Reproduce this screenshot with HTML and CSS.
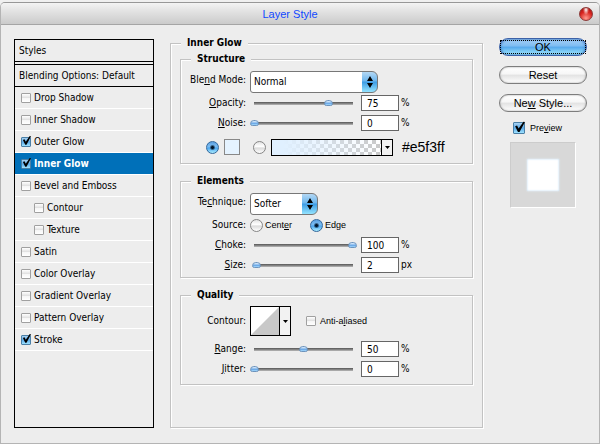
FILE: index.html
```html
<!DOCTYPE html>
<html lang="en">
<head>
<meta charset="utf-8">
<title>Layer Style</title>
<link rel="stylesheet" href="styles.css">
</head>
<body>
<main class="window">
  <header class="titlebar">
    <h1>Layer Style</h1>
    <button class="close" type="button" aria-label="Close"></button>
  </header>
  <form class="content">
    <nav class="styles">
      <h2>Styles</h2>
      <p class="blending">Blending Options: Default</p>
      <ul>
        <li><label><input type="checkbox" class="check">Drop Shadow</label></li>
        <li><label><input type="checkbox" class="check">Inner Shadow</label></li>
        <li><label><input type="checkbox" class="check" checked>Outer Glow</label></li>
        <li class="selected"><label><input type="checkbox" class="check" checked>Inner Glow</label></li>
        <li><label><input type="checkbox" class="check">Bevel and Emboss</label></li>
        <li class="nested"><label><input type="checkbox" class="check">Contour</label></li>
        <li class="nested"><label><input type="checkbox" class="check">Texture</label></li>
        <li><label><input type="checkbox" class="check">Satin</label></li>
        <li><label><input type="checkbox" class="check">Color Overlay</label></li>
        <li><label><input type="checkbox" class="check">Gradient Overlay</label></li>
        <li><label><input type="checkbox" class="check">Pattern Overlay</label></li>
        <li><label><input type="checkbox" class="check" checked>Stroke</label></li>
      </ul>
    </nav>

    <fieldset class="panel">
      <legend>Inner Glow</legend>
      <fieldset class="group structure">
        <legend>Structure</legend>
        <div class="row tall">
          <label class="name" for="blend">Ble<u>n</u>d Mode:</label>
          <span class="select wide">
            <select id="blend"><option>Normal</option><option>Screen</option></select>
            <svg viewBox="0 0 8 12" aria-hidden="true"><path d="M4 0 7 5H1zM4 12 1 7H7z"/></svg>
          </span>
        </div>
        <div class="row">
          <label class="name" for="opacity"><u>O</u>pacity:</label>
          <input class="slider" type="range" min="0" max="100" value="75" aria-label="Opacity slider">
          <input class="value" id="opacity" type="text" value="75"><span class="unit">%</span>
        </div>
        <div class="row">
          <label class="name" for="noise"><u>N</u>oise:</label>
          <input class="slider" type="range" min="0" max="100" value="0" aria-label="Noise slider">
          <input class="value" id="noise" type="text" value="0"><span class="unit">%</span>
        </div>
        <div class="fill">
          <input class="radio" type="radio" name="fill" aria-label="Solid color" checked>
          <button class="swatch" type="button" aria-label="Glow color"></button>
          <input class="radio" type="radio" name="fill" aria-label="Gradient">
          <button class="gradient" type="button" aria-label="Choose gradient"><span class="ramp"></span><span class="drop"><svg viewBox="0 0 5 3" aria-hidden="true"><path d="M0 0H5L2.500 3z"/></svg></span></button>
          <span class="hex">#e5f3ff</span>
        </div>
      </fieldset>

      <fieldset class="group elements">
        <legend>Elements</legend>
        <div class="row tall">
          <label class="name" for="technique">Te<u>c</u>hnique:</label>
          <span class="select">
            <select id="technique"><option>Softer</option><option>Precise</option></select>
            <svg viewBox="0 0 8 12" aria-hidden="true"><path d="M4 0 7 5H1zM4 12 1 7H7z"/></svg>
          </span>
        </div>
        <div class="row source">
          <span class="name">Source:</span>
          <label class="small"><input class="radio" type="radio" name="source"><span>Cent<u>e</u>r</span></label>
          <label class="small"><input class="radio" type="radio" name="source" checked><span>Ed<u>g</u>e</span></label>
        </div>
        <div class="row">
          <label class="name" for="choke"><u>C</u>hoke:</label>
          <input class="slider" type="range" min="0" max="100" value="100" aria-label="Choke slider">
          <input class="value" id="choke" type="text" value="100"><span class="unit">%</span>
        </div>
        <div class="row">
          <label class="name" for="size"><u>S</u>ize:</label>
          <input class="slider" type="range" min="0" max="100" value="2" aria-label="Size slider">
          <input class="value" id="size" type="text" value="2"><span class="unit">px</span>
        </div>
      </fieldset>

      <fieldset class="group quality">
        <legend>Quality</legend>
        <div class="row curve">
          <label class="name" for="contour">Contour:</label>
          <button class="contour" id="contour" type="button"><svg class="shape" viewBox="0 0 28 28" aria-hidden="true"><path d="M0 28 28 0V28z"/></svg><span class="drop"><svg viewBox="0 0 5 3" aria-hidden="true"><path d="M0 0H5L2.500 3z"/></svg></span></button>
          <label class="small anti"><input type="checkbox" class="check"><span>Anti-a<u>l</u>iased</span></label>
        </div>
        <div class="row">
          <label class="name" for="range"><u>R</u>ange:</label>
          <input class="slider" type="range" min="0" max="100" value="50" aria-label="Range slider">
          <input class="value" id="range" type="text" value="50"><span class="unit">%</span>
        </div>
        <div class="row">
          <label class="name" for="jitter"><u>J</u>itter:</label>
          <input class="slider" type="range" min="0" max="100" value="0" aria-label="Jitter slider">
          <input class="value" id="jitter" type="text" value="0"><span class="unit">%</span>
        </div>
      </fieldset>
    </fieldset>

    <aside class="actions">
      <button class="pill primary" type="button">OK</button>
      <button class="pill" type="button">Reset</button>
      <button class="pill" type="button">Ne<u>w</u> Style...</button>
      <label class="preview"><input type="checkbox" class="check large" checked><span>Pre<u>v</u>iew</span></label>
      <div class="thumbnail"><div class="sample"></div></div>
    </aside>
  </form>
</main>
</body>
</html>
```
FILE: styles.css
```css
* {
  box-sizing: border-box;
}

body {
  margin: 0;
  padding-top: 2px;
  min-height: 100vh;
  display: flex;
  flex-direction: column;
  background: #f0f0f0;
  color: #000;
  font: 10px/14px "DejaVu Sans Condensed", "DejaVu Sans", sans-serif;
}

h1, h2, p, ul {
  margin: 0;
  padding: 0;
  font: inherit;
}

button, input, select {
  margin: 0;
  padding: 0;
  font: inherit;
  color: inherit;
}

u {
  text-underline-offset: 1px;
}

.window {
  flex: 1;
  display: flex;
  flex-direction: column;
  border: 1px solid #b4b4b4;
  border-top-color: #989898;
  border-radius: 5px 5px 0 0;
  background: #ededed;
  overflow: hidden;
}

.titlebar {
  display: flex;
  align-items: center;
  height: 22px;
  padding-right: 6px;
  border-bottom: 1px solid #a5a5a5;
  background: linear-gradient(#f4f4f4, #e2e2e2 40%, #cbcbcb);
}

.titlebar h1 {
  flex: 1;
  text-align: center;
  font: 11px/14px "Liberation Sans", Arial, sans-serif;
  color: #1048ff;
}

.close {
  width: 14px;
  height: 14px;
  border: 1px solid #8c3a38;
  border-radius: 50%;
  background:
    radial-gradient(ellipse at 50% 15%, #fff 0, rgba(255, 255, 255, 0) 35%),
    radial-gradient(circle at 50% 85%, #ff9c90, #d8241f 55%, #98110f);
}

.content {
  flex: 1;
  display: grid;
  grid-template-columns: 140px minmax(0, 1fr) 88px;
  gap: 16px;
  padding: 10px 12px 15px 13px;
}

/* Style list */

.styles {
  margin-top: 4px;
  border: 1px solid #000;
}

.styles h2,
.blending {
  height: 22px;
  padding-left: 4px;
  line-height: 21px;
  border-bottom: 1px solid #000;
}

.blending {
  height: 23px;
  margin-top: 2px;
  border-top: 1px solid #000;
}

.styles ul {
  list-style: none;
}

.styles li {
  height: 22px;
  padding-left: 6px;
  border-bottom: 1px solid #fff;
}

.styles li label {
  display: flex;
  align-items: center;
  gap: 3px;
  height: 21px;
}

.styles .nested {
  padding-left: 19px;
}

.styles .selected {
  background: #0070b9;
  color: #fff;
  font-weight: bold;
}

/* Check boxes and radio buttons */

.check {
  appearance: none;
  position: relative;
  flex: none;
  width: 10px;
  height: 10px;
  border: 1px solid #a0a0a0;
  border-radius: 1px;
  background: linear-gradient(#fff, #dedede 50%, #f6f6f6 55%, #fff);
}

.check:checked {
  border-color: #4a7fa6;
  background: linear-gradient(#a8d2f2, #5aa9e8 50%, #9ee2ff);
}

.check:checked::before {
  content: "";
  position: absolute;
  inset: -2px -1px 0 0;
  background: #000;
  clip-path: polygon(10% 44%, 28% 38%, 42% 62%, 86% 6%, 100% 8%, 50% 92%, 36% 92%);
}

.check.large {
  width: 12px;
  height: 12px;
}

.radio {
  appearance: none;
  flex: none;
  width: 13px;
  height: 13px;
  border: 1px solid #858585;
  border-radius: 50%;
  background: linear-gradient(#e2e2e2, #fff 40%, #dcdcdc 55%, #fff);
}

.radio:checked {
  border-color: #33689c;
  background:
    radial-gradient(circle, #001428 0, #001428 1px, transparent 3px),
    linear-gradient(#5b9fe0, #7cbdf2 40%, #4ea6ee 55%, #a8ecff);
}

/* Settings panel */

fieldset {
  min-width: 0;
  margin: 0;
  padding: 0;
  border: 1px solid #c2c2c2;
  box-shadow: 1px 1px 0 #fff, inset 1px 1px 0 #fff;
}

legend {
  padding: 0 6px;
  background: #ededed;
  font-weight: bold;
  line-height: 16px;
}

.panel {
  padding: 0 9px;
}

.panel > legend {
  margin-left: 1px;
}

.group {
  padding: 0 1px 2px;
}

.group > legend {
  margin-left: 9px;
}

.group + .group {
  margin-top: 9px;
}

.quality {
  padding-bottom: 5px;
}

.row {
  display: flex;
  align-items: center;
  height: 20px;
}

.tall {
  height: 26px;
}

.name {
  flex: none;
  width: 64px;
  margin-right: 4px;
  text-align: right;
}

.select {
  position: relative;
  align-self: flex-end;
  width: 68px;
  height: 22px;
}

.select.wide {
  width: 128px;
}

.select select {
  appearance: none;
  width: 100%;
  height: 22px;
  padding-left: 3px;
  border: 1px solid #777;
  border-radius: 3px 6px 6px 3px;
  background:
    linear-gradient(#b4d8f4, #6cb6ee 45%, #3c9be4 50%, #94e4ff) right / 15px 100% no-repeat,
    #fff;
}

.select svg {
  position: absolute;
  top: 5px;
  right: 4px;
  width: 8px;
  height: 12px;
  pointer-events: none;
}

.slider {
  appearance: none;
  flex: none;
  width: 107px;
  height: 8px;
  background: linear-gradient(#555, #8c8c8c 60%, #bcbcbc) center / 99px 3px no-repeat;
}

.slider::-webkit-slider-thumb {
  appearance: none;
  width: 9px;
  height: 6px;
  border: 1px solid #6d94bd;
  border-radius: 5px 5px 3px 3px;
  background: linear-gradient(#e4f2ff, #6ba8e6 60%, #a6dcff);
}

.value {
  width: 38px;
  height: 16px;
  margin: 0 2px 0 4px;
  padding-left: 5px;
  border: 1px solid #666;
  background: #fff;
}

.fill {
  display: flex;
  align-items: center;
  height: 28px;
  padding-left: 24px;
}

.swatch {
  width: 16px;
  height: 16px;
  margin: 0 13px 0 5px;
  border: 1px solid #888;
  background: #e5f3ff;
}

.gradient {
  display: flex;
  width: 122px;
  height: 17px;
  margin: 0 9px 0 5px;
  border: 1px solid #000;
}

.ramp {
  flex: 1;
  background:
    linear-gradient(90deg, #e0f0ff 10%, rgba(224, 240, 255, 0)),
    repeating-conic-gradient(#c8c8c8 0 25%, #fff 0 50%) 0 0 / 8px 8px;
}

.drop {
  display: grid;
  place-items: center;
  width: 11px;
  border-left: 1px solid #000;
  background: #f2f2f2;
}

.drop svg {
  width: 5px;
  height: 3px;
}

.hex {
  font: 14px/16px "Liberation Sans", Arial, sans-serif;
}

.small {
  display: flex;
  align-items: center;
  gap: 2px;
  font: 9px/12px "Liberation Sans", Arial, sans-serif;
}

.source .small {
  width: 60px;
}

.curve {
  height: 36px;
}

.contour {
  display: flex;
  width: 41px;
  height: 30px;
  border: 1px solid #000;
  background: #fff;
}

.contour .shape {
  width: 28px;
  height: 28px;
  fill: #c8c8c8;
}

.anti {
  gap: 4px;
  margin-left: 15px;
}

/* Actions */

.actions {
  display: flex;
  flex-direction: column;
  align-items: center;
  padding-top: 3px;
}

.pill {
  position: relative;
  width: 100%;
  height: 18px;
  margin-bottom: 10px;
  border: 1px solid #7d7d7d;
  border-radius: 9px;
  background: linear-gradient(#fff, #f6f6f6 45%, #e2e2e2 50%, #fff);
  box-shadow: inset 0 0 2px #999;
  font: 11px/14px "Liberation Sans", Arial, sans-serif;
}

.primary {
  border-color: #3d62a8;
  background: linear-gradient(#a8d0f6, #7cbcf2 45%, #55a8ec 50%, #a4ecff);
  box-shadow: inset 0 0 3px #1c58a8;
}

.primary::after {
  content: "";
  position: absolute;
  inset: 1px 0;
  border: 1px dotted #000;
}

.preview {
  display: flex;
  align-self: flex-start;
  align-items: center;
  gap: 5px;
  margin: 0 0 8px 14px;
  font: 9px/12px "Liberation Sans", Arial, sans-serif;
}

.thumbnail {
  display: grid;
  place-items: center;
  width: 66px;
  height: 66px;
  border: 1px solid;
  border-color: #ccc #fff #fff #ccc;
  background: #d8d8d8;
}

.sample {
  width: 32px;
  height: 32px;
  background: #fff;
  box-shadow: inset 0 0 2px #b4d4ee, 0 0 2px #e5f3ff;
}
```
